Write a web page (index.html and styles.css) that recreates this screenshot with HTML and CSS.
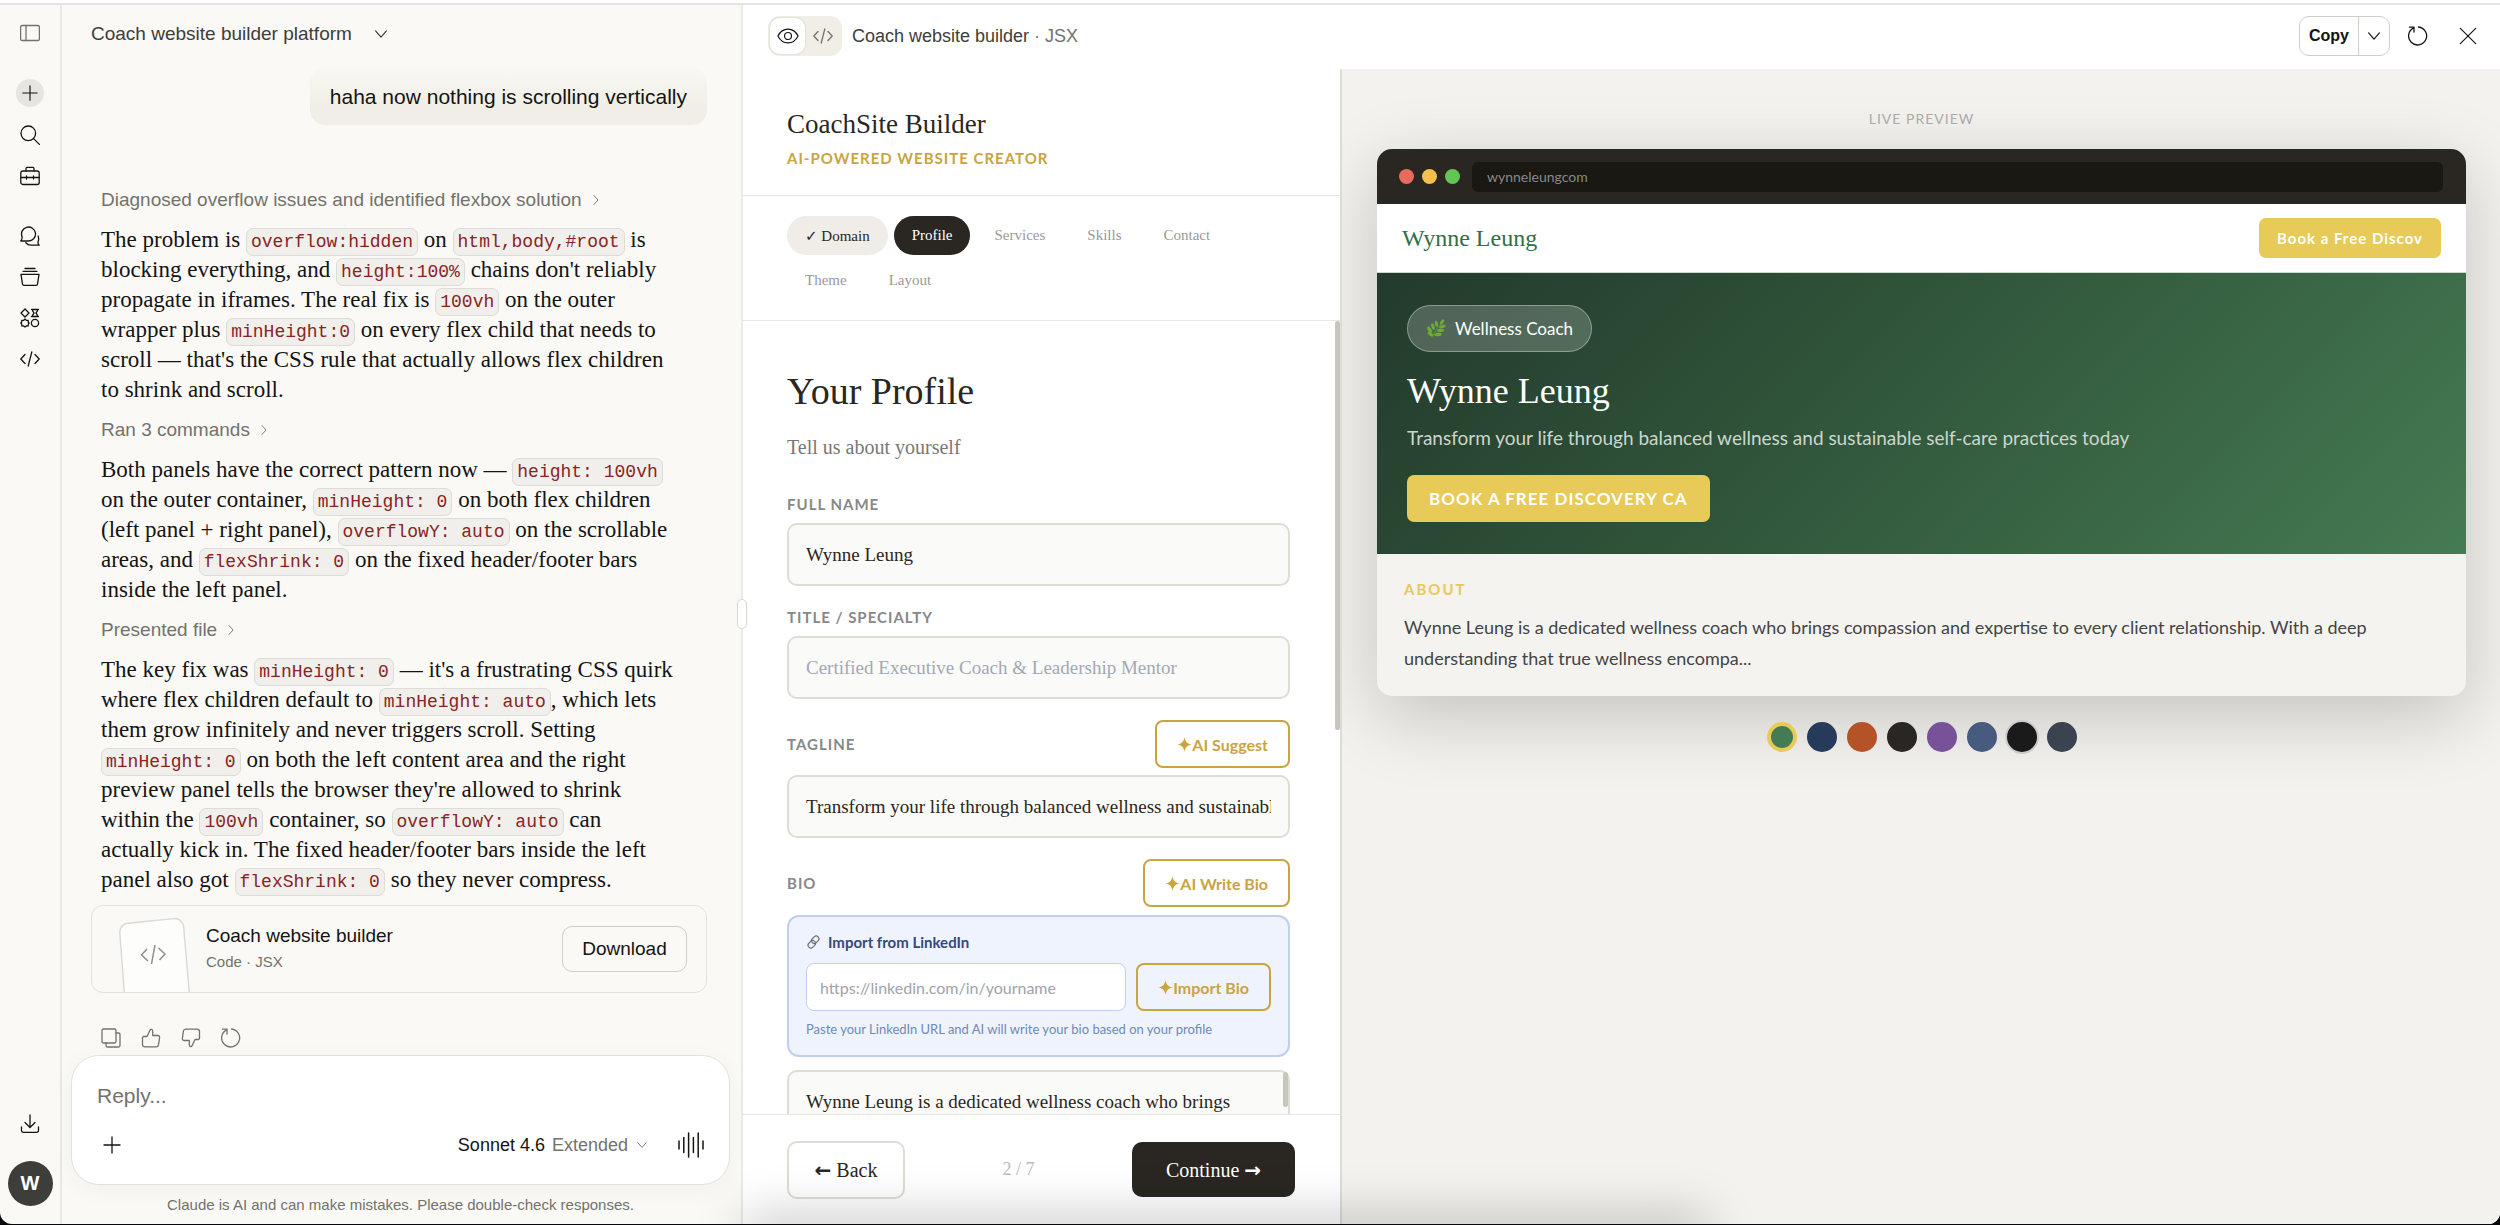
FILE: index.html
```html
<!DOCTYPE html>
<html lang="en">
<head>
<meta charset="utf-8">
<title>Coach website builder platform</title>
<link rel="stylesheet" href="styles.css">
</head>
<body>
<svg class="sprite" aria-hidden="true">
  <symbol id="i-code" viewBox="0 0 20 20"><path d="M5 5.500.8 10 5 14.500M15 5.500l4.200 4.500L15 14.500M11.800 3 8.200 17"/></symbol>
  <symbol id="i-plus" viewBox="0 0 20 20"><path d="M10 2v16M2 10h16"/></symbol>
  <symbol id="i-down" viewBox="0 0 20 20"><path d="m4 6.500 6 7 6-7"/></symbol>
  <symbol id="i-right" viewBox="0 0 20 20"><path d="m7 3.500 6 6.500-6 6.500"/></symbol>
  <symbol id="i-retry" viewBox="0 0 20 20"><path d="M1.500 1.200H6V6M5.800 1.800A9 9 0 1 0 10.500 1"/></symbol>
  <symbol id="i-spark" viewBox="0 0 20 20"><path d="M10 0c1 6.500 3.500 9 10 10-6.500 1-9 3.500-10 10-1-6.500-3.500-9-10-10 6.500-1 9-3.500 10-10z"/></symbol>
</svg>
<div class="app">
  <nav class="rail" aria-label="Main">
    <button class="rail-btn rail-toggle" aria-label="Toggle sidebar"><svg class="icon" viewBox="0 0 20 20"><rect x=".6" y="2.500" width="18.800" height="15" rx="1.500"/><path d="M6 2.500v15"/></svg></button>
    <button class="rail-btn rail-new" aria-label="New chat"><svg class="icon sm"><use href="#i-plus"/></svg></button>
    <button class="rail-btn" aria-label="Search"><svg class="icon" viewBox="0 0 20 20"><circle cx="8.300" cy="8.300" r="7.300"/><path d="m13.600 13.600 5.800 5.800"/></svg></button>
    <button class="rail-btn" aria-label="Customize"><svg class="icon" viewBox="0 0 20 20"><path d="M6 5V2.500A1.200 1.200 0 0 1 7.200 1.300h5.600A1.200 1.200 0 0 1 14 2.500V5"/><rect x=".8" y="5" width="18.400" height="13.500" rx="2"/><path d="M1 11.500h18M6.500 10v3M13.500 10v3"/></svg></button>
    <button class="rail-btn rail-gap" aria-label="Chats"><svg class="icon" viewBox="0 0 20 20"><path d="M.8 15h7.400A7 7 0 1 0 2.200 11c0 1.500-.4 2.800-1.400 4zM5.800 16.800c1.400 1.600 3.200 2.400 5.400 2.400h8c-.9-.9-1.300-2-1.300-3.200 1-1.800 1-3.800.2-6"/></svg></button>
    <button class="rail-btn" aria-label="Projects"><svg class="icon" viewBox="0 0 20 20"><path d="M5 1.500h10M3 4.300h14M1 7.300h18l-1.500 9.800a1.500 1.500 0 0 1-1.500 1.200H4a1.500 1.500 0 0 1-1.500-1.200z"/></svg></button>
    <button class="rail-btn" aria-label="Artifacts"><svg class="icon" viewBox="0 0 20 20"><path d="m5 1 4 4-4 4-4-4zM11.500 1.500h7M11.500 8.500h7M12.500 1.500c0 3 1.500 2.500 1.500 3.500s-1.500.5-1.500 3.500M17.500 1.500c0 3-1.500 2.500-1.500 3.500s1.500.5 1.500 3.500"/><circle cx="15" cy="15" r="3.600"/><path d="m5 11 1.300 1.400 1.900.1.100 1.900L9.200 15l-.9 1.200-.1 1.700-1.900.1L5 19l-1.300-1-1.900-.1-.1-1.900L.8 15l.9-1 .1-1.500 1.900-.1z"/></svg></button>
    <button class="rail-btn" aria-label="Code"><svg class="icon"><use href="#i-code"/></svg></button>
    <button class="rail-btn rail-download" aria-label="Downloads"><svg class="icon" viewBox="0 0 20 20"><path d="M10 1v12M5 8.500l5 5 5-5M1.500 13v3.500a1.800 1.800 0 0 0 1.800 1.800h13.400a1.800 1.800 0 0 0 1.800-1.800V13"/></svg></button>
    <button class="avatar" aria-label="Account">W</button>
  </nav>

  <main class="chat">
    <header class="chat-head"><h1>Coach website builder platform</h1><button class="plain" aria-label="Chat options"><svg class="icon sm"><use href="#i-down"/></svg></button></header>
    <div class="thread">
      <p class="bubble">haha now nothing is scrolling vertically</p>
      <div class="reply">
        <button class="step">Diagnosed overflow issues and identified flexbox solution <svg class="icon xs"><use href="#i-right"/></svg></button>
        <p>The problem is <code>overflow:hidden</code> on <code>html,body,#root</code> is<br>blocking everything, and <code>height:100%</code> chains don't reliably<br>propagate in iframes. The real fix is <code>100vh</code> on the outer<br>wrapper plus <code>minHeight:0</code> on every flex child that needs to<br>scroll — that's the CSS rule that actually allows flex children<br>to shrink and scroll.</p>
        <button class="step">Ran 3 commands <svg class="icon xs"><use href="#i-right"/></svg></button>
        <p>Both panels have the correct pattern now — <code>height: 100vh</code><br>on the outer container, <code>minHeight: 0</code> on both flex children<br>(left panel + right panel), <code>overflowY: auto</code> on the scrollable<br>areas, and <code>flexShrink: 0</code> on the fixed header/footer bars<br>inside the left panel.</p>
        <button class="step">Presented file <svg class="icon xs"><use href="#i-right"/></svg></button>
        <p>The key fix was <code>minHeight: 0</code> — it's a frustrating CSS quirk<br>where flex children default to <code>minHeight: auto</code>, which lets<br>them grow infinitely and never triggers scroll. Setting<br><code>minHeight: 0</code> on both the left content area and the right<br>preview panel tells the browser they're allowed to shrink<br>within the <code>100vh</code> container, so <code>overflowY: auto</code> can<br>actually kick in. The fixed header/footer bars inside the left<br>panel also got <code>flexShrink: 0</code> so they never compress.</p>
      </div>
      <article class="file">
        <div class="thumb"><svg viewBox="0 0 74 88"><path class="sheet" d="M5.500 90 .8 28a9 9 0 0 1 8-9.800l46-4.600a9 9 0 0 1 9.800 8L70.500 90"/><path d="m28 44-5.500 6 6.500 6M39.500 43l6.500 6-5.500 6M36 40l-3.500 19"/></svg></div>
        <div class="file-text"><strong>Coach website builder</strong><span>Code · JSX</span></div>
        <button class="download">Download</button>
      </article>
      <div class="actions">
        <button class="plain" aria-label="Copy"><svg class="icon" viewBox="0 0 20 20"><rect x="1" y="1" width="14" height="14" rx="1.500"/><path d="M15 5h2.500A1.500 1.500 0 0 1 19 6.500v11a1.500 1.500 0 0 1-1.500 1.500h-11A1.500 1.500 0 0 1 5 17.500V15"/></svg></button>
        <button class="plain" aria-label="Good response"><svg class="icon" viewBox="0 0 20 20"><path d="M2.500 8.500H6L9 2.200c.4-1.300 2.700-1.300 2.700 1v4.300h5c1.400 0 2.100 1 1.900 2.200l-1.100 7.100c-.2 1.200-1 2-2.200 2H4c-1.500 0-2.500-.8-2.500-2.300V9.500z"/></svg></button>
        <button class="plain" aria-label="Bad response"><svg class="icon" viewBox="0 0 20 20"><path d="M17.500 11.500H14L11 17.800c-.4 1.300-2.700 1.300-2.700-1v-4.300h-5c-1.400 0-2.100-1-1.900-2.200l1-7.100c.2-1.200 1-2 2.200-2H16c1.500 0 2.500.8 2.500 2.300v7z"/></svg></button>
        <button class="plain" aria-label="Retry"><svg class="icon"><use href="#i-retry"/></svg></button>
      </div>
    </div>
    <form class="composer">
      <input type="text" aria-label="Reply" placeholder="Reply...">
      <div class="composer-row">
        <button type="button" class="plain" aria-label="Add"><svg class="icon"><use href="#i-plus"/></svg></button>
        <button type="button" class="model"><b>Sonnet 4.6</b> Extended <svg class="icon xs"><use href="#i-down"/></svg></button>
        <button type="button" class="plain" aria-label="Voice"><svg class="icon voice" viewBox="0 0 26 26"><path d="M1 9v8M5.800 5.500v15M10.600 1v24M15.400 5.500v15M20.200 1v24M25 9v8"/></svg></button>
      </div>
    </form>
    <p class="note">Claude is AI and can make mistakes. Please double-check responses.</p>
    <span class="grip"></span>
  </main>

  <section class="artifact">
    <header class="art-head">
      <div class="seg"><button class="on" aria-label="Preview"><svg class="icon eye" viewBox="0 0 24 20"><path d="M1 10C3.500 5 7.500 2.500 12 2.500S20.500 5 23 10c-2.500 5-6.500 7.500-11 7.500S3.500 15 1 10z"/><circle cx="12" cy="10" r="3.800"/></svg></button><button aria-label="Code"><svg class="icon"><use href="#i-code"/></svg></button></div>
      <h2>Coach website builder <span>· JSX</span></h2>
      <div class="split"><button>Copy</button><button aria-label="More"><svg class="icon sm"><use href="#i-down"/></svg></button></div>
      <button class="plain" aria-label="Reload"><svg class="icon"><use href="#i-retry"/></svg></button>
      <button class="plain close" aria-label="Close"><svg class="icon sm" viewBox="0 0 20 20"><path d="m1.500 1.500 17 17M18.500 1.500l-17 17"/></svg></button>
    </header>

    <div class="builder">
      <header class="brand"><h2>CoachSite Builder</h2><p class="caps gold">AI-POWERED WEBSITE CREATOR</p></header>
      <nav class="tabs" aria-label="Steps">
        <button class="done"><i>✓</i> Domain</button><button class="current">Profile</button><button>Services</button><button>Skills</button><button>Contact</button><button>Theme</button><button>Layout</button>
      </nav>
      <div class="form-wrap">
        <form class="form">
          <h2>Your Profile</h2>
          <p class="lead">Tell us about yourself</p>
          <label class="caps" for="name">FULL NAME</label>
          <input class="field" id="name" type="text" value="Wynne Leung">
          <label class="caps" for="spec">TITLE / SPECIALTY</label>
          <input class="field" id="spec" type="text" placeholder="Certified Executive Coach &amp; Leadership Mentor">
          <div class="label-row"><label class="caps" for="tag">TAGLINE</label><button type="button" class="ai"><svg class="spark"><use href="#i-spark"/></svg>AI Suggest</button></div>
          <input class="field" id="tag" type="text" value="Transform your life through balanced wellness and sustainable self-care practices today">
          <div class="label-row"><label class="caps" for="bio">BIO</label><button type="button" class="ai"><svg class="spark"><use href="#i-spark"/></svg>AI Write Bio</button></div>
          <div class="import">
            <label for="li"><svg class="link" viewBox="0 0 20 20"><rect x="8.500" y="1.500" width="7.500" height="11" rx="3.700" transform="rotate(45 12.200 7)"/><rect x="4" y="7.500" width="7.500" height="11" rx="3.700" transform="rotate(45 7.700 13)"/></svg>Import from LinkedIn</label>
            <div class="import-row"><input id="li" type="text" placeholder="https://linkedin.com/in/yourname"><button type="button" class="ai"><svg class="spark"><use href="#i-spark"/></svg>Import Bio</button></div>
            <p>Paste your LinkedIn URL and AI will write your bio based on your profile</p>
          </div>
          <div class="bio-box"><textarea class="field" id="bio">Wynne Leung is a dedicated wellness coach who brings</textarea><span class="thumb-sm"></span></div>
        </form>
        <span class="scroll-thumb"></span>
      </div>
      <footer class="steps"><button class="back"><i>←</i> Back</button><span>2 / 7</span><button class="next">Continue <i>→</i></button></footer>
    </div>

    <div class="preview">
      <p class="live">LIVE PREVIEW</p>
      <div class="site">
        <div class="chrome"><i class="r"></i><i class="y"></i><i class="g"></i><span>wynneleungcom</span></div>
        <div class="site-nav"><a class="logo" href="#">Wynne Leung</a><a class="cta-sm" href="#">Book a Free Discov</a></div>
        <div class="hero">
          <span class="pill"><svg class="leaf" viewBox="0 0 20 20"><path class="stem" d="M6 19C8 13 11 9 15.500 5"/><g><ellipse cx="3.500" cy="10.500" rx="1.700" ry="3.300" transform="rotate(-35 3.500 10.500)"/><ellipse cx="7" cy="7.500" rx="1.600" ry="3.300" transform="rotate(-20 7 7.500)"/><ellipse cx="10.500" cy="4.800" rx="1.500" ry="3.200" transform="rotate(-10 10.500 4.800)"/><ellipse cx="16" cy="3" rx="1.500" ry="3.200" transform="rotate(35 16 3)"/><ellipse cx="16.500" cy="7.500" rx="1.500" ry="3.400" transform="rotate(75 16.500 7.500)"/><ellipse cx="14.500" cy="11.300" rx="1.600" ry="3.600" transform="rotate(85 14.500 11.300)"/><ellipse cx="12" cy="15.500" rx="1.700" ry="3.800" transform="rotate(85 12 15.500)"/><ellipse cx="4.500" cy="15" rx="1.700" ry="3.300" transform="rotate(-50 4.500 15)"/></g></svg>Wellness Coach</span>
          <h2>Wynne Leung</h2>
          <p>Transform your life through balanced wellness and sustainable self-care practices today</p>
          <a class="cta" href="#">BOOK A FREE DISCOVERY CA</a>
        </div>
        <div class="about"><h3>ABOUT</h3><p>Wynne Leung is a dedicated wellness coach who brings compassion and expertise to every client relationship. With a deep<br>understanding that true wellness encompa...</p></div>
      </div>
      <div class="swatches">
        <button class="sw sw-green" aria-label="Green"></button><button class="sw sw-navy" aria-label="Navy"></button><button class="sw sw-rust" aria-label="Rust"></button><button class="sw sw-ink" aria-label="Ink"></button><button class="sw sw-purple" aria-label="Purple"></button><button class="sw sw-blue" aria-label="Blue"></button><button class="sw sw-black" aria-label="Black"></button><button class="sw sw-slate" aria-label="Slate"></button>
      </div>
    </div>
  </section>
</div>
</body>
</html>
```
FILE: styles.css
```css
:root {
  --sans: "Liberation Sans", Arial, sans-serif;
  --serif: "Liberation Serif", "Times New Roman", serif;
  --geo: Lato, "Open Sans", sans-serif;
  --gold: #c9a43f;
  --ink: #2a2621;
}
* { box-sizing: border-box; }
html, body { height: 100%; }
body { margin: 0; background: #08080c; font-family: var(--sans); color: #141413; overflow: hidden; }
h1, h2, h3, p { margin: 0; font-weight: 400; }
button { font: inherit; color: inherit; background: none; border: 0; padding: 0; white-space: nowrap; }
input, textarea { font: inherit; color: inherit; outline: 0; }
a { color: inherit; text-decoration: none; }
i { font-style: normal; }
.sprite { display: none; }
.icon { width: 20px; height: 20px; display: block; fill: none; stroke: currentColor; stroke-width: 1.3; stroke-linecap: round; stroke-linejoin: round; flex: none; }
.icon.sm { width: 18px; height: 18px; }
.icon.xs { width: 14px; height: 14px; }
.plain { display: grid; place-items: center; }

.app { display: grid; grid-template-rows: minmax(0, 1fr); grid-template-columns: 62px minmax(0, 681fr) minmax(0, 1757fr); height: calc(100vh - 1px); border-top: 3px solid #fff; border-radius: 0 0 12px 12px; background: #faf9f5; overflow: hidden; position: relative; }
.app::before { content: ""; position: absolute; top: 0; left: 0; right: 0; height: 2px; background: #e5e5e4; z-index: 2; }
.app::after { content: ""; position: absolute; left: 30%; right: 32%; bottom: -20px; height: 20px; box-shadow: 0 0 50px 6px rgba(0, 0, 0, .26); pointer-events: none; }

.rail { display: flex; flex-direction: column; align-items: center; border-right: 2px solid #e9e8e4; padding: 16px 0 18px; }
.rail-btn { display: grid; place-items: center; width: 28px; height: 28px; margin-bottom: 13px; }
.rail-toggle { margin-bottom: 32px; color: #73726c; }
.rail-new { background: #e6e5e0; border-radius: 50%; margin-bottom: 14px; }
.rail-gap { margin-top: 19px; }
.rail-download { margin-top: auto; margin-bottom: 23px; }
.avatar { width: 45px; height: 45px; border-radius: 50%; background: #3d3d3a; color: #fff; font-size: 20px; font-weight: 700; }

.chat { position: relative; display: flex; flex-direction: column; min-width: 0; padding: 2px 11px 9px 9px; border-right: 2px solid #ebeae6; }
.chat-head { display: flex; align-items: center; gap: 20px; height: 57px; padding-left: 20px; color: #3d3d3a; }
.chat-head h1 { font-size: 19px; }
.thread { display: flex; flex-direction: column; padding: 6px 23px 0 20px; }
.bubble { align-self: flex-end; padding: 14px 20px; line-height: 29px; font-size: 21px; border-radius: 15px; background: linear-gradient(#f8f7f3, #f0eee6 70%); white-space: nowrap; }
.reply { padding: 60px 0 0 10px; display: flex; flex-direction: column; align-items: flex-start; gap: 10px; }
.step { display: flex; align-items: center; gap: 7px; line-height: 30px; font-size: 19px; color: #73726c; }
.reply p { font-family: var(--serif); font-size: 23px; line-height: 30px; white-space: nowrap; }
code { font-family: "Liberation Mono", monospace; font-size: 18px; line-height: 20px; color: #8a2424; background: #f0efeb; border: 1px solid #dddcd6; border-radius: 7px; padding: 3px 4px; }
.file { display: flex; align-items: center; height: 88px; margin-top: 10px; padding: 0 19px 0 27px; border: 1px solid #e2e1db; border-radius: 12px; overflow: hidden; }
.thumb { width: 74px; height: 88px; }
.thumb svg { width: 74px; height: 88px; display: block; fill: none; stroke: #8b8a85; stroke-width: 1.4; }
.thumb .sheet { fill: #fdfdfb; stroke: #dad9d4; }
.file-text { flex: 1; display: flex; flex-direction: column; gap: 2px; margin-left: 13px; line-height: 24px; font-size: 15px; color: #73726c; }
.file-text strong { font-weight: 400; font-size: 19px; color: #141413; }
.download { width: 125px; height: 46px; border: 1px solid #cfcec8; border-radius: 10px; font-size: 19px; }
.actions { display: flex; gap: 20px; margin: 35px 0 0 10px; color: #73726c; }
.composer { margin-top: auto; height: 130px; padding: 23px 25px 23px 25px; display: flex; flex-direction: column; justify-content: space-between; background: #fff; border: 1px solid #e2e1db; border-radius: 28px; box-shadow: 0 5px 25px rgba(0, 0, 0, .04); flex: none; }
.composer input { border: 0; background: none; padding: 0; height: 34px; font-size: 21px; width: 100%; }
.composer input::placeholder { color: #73726c; opacity: 1; }
.composer-row { display: flex; align-items: center; gap: 29px; height: 32px; padding-left: 5px; }
.model { margin-left: auto; display: flex; align-items: center; gap: 7px; font-size: 18px; color: #73726c; }
.model b { font-weight: 400; color: #141413; }
.icon.voice { width: 26px; height: 26px; stroke-width: 1.5; }
.note { margin-top: 10px; line-height: 20px; font-size: 15px; text-align: center; color: #73726c; }
.grip { position: absolute; right: -6px; top: 596px; width: 10px; height: 30px; border-radius: 5px; background: #fff; border: 1px solid #d6d5d0; z-index: 3; }

.artifact { display: grid; grid-template: 66px minmax(0, 1fr) / minmax(0, 599fr) minmax(0, 1158fr); background: #fff; min-width: 0; }
.art-head { grid-column: 1 / -1; display: flex; align-items: center; padding: 0 23px 0 25px; }
.seg { display: flex; width: 74px; height: 40px; padding: 2px; border-radius: 12px; background: #f0eee6; color: #73726c; }
.seg button { flex: 1; display: grid; place-items: center; border-radius: 10px; }
.seg .on { background: #fff; color: #141413; box-shadow: 0 0 1px 1px #e2e0d8; }
.icon.eye { width: 22px; }
.art-head h2 { margin: 0 auto 0 10px; font-size: 18px; color: #3d3d3a; }
.art-head h2 span { color: #73726c; }
.split { display: flex; height: 40px; border: 1px solid #cfcec8; border-radius: 10px; font-size: 16px; font-weight: 700; margin-right: 18px; }
.split button { width: 58px; display: grid; place-items: center; }
.split button + button { width: 31px; border-left: 1px solid #cfcec8; }
.close { margin-left: 31px; }

.builder { display: flex; flex-direction: column; min-height: 0; border-right: 2px solid #deddd5; font-family: var(--serif); color: var(--ink); }
.brand { padding: 37px 44px 27px; border-bottom: 1px solid #e8e6e0; }
.brand h2 { font-size: 27px; line-height: 36px; }
.caps { display: block; font-family: var(--geo); font-weight: 700; font-size: 15px; line-height: 20px; letter-spacing: 1px; color: #888; }
.brand .caps { margin-top: 6px; }
.caps.gold { color: var(--gold); }
.tabs { display: flex; flex-wrap: wrap; gap: 6px; padding: 20px 44px; border-bottom: 1px solid #e8e6e0; font-size: 15px; color: #999; }
.tabs button { height: 39px; padding: 0 18px; border-radius: 20px; }
.tabs .done { background: #f0ede8; color: var(--ink); }
.tabs .done i { font-family: "DejaVu Sans"; font-weight: 700; }
.tabs .current { background: var(--ink); color: #fff; }
.form-wrap { flex: 1; min-height: 0; position: relative; overflow: hidden; }
.form { padding: 46px 50px 0 44px; display: flex; flex-direction: column; }
.form h2 { font-size: 38px; line-height: 48px; }
.lead { margin: 20px 0 13px; font-size: 20px; line-height: 24px; color: #777; }
.form > .caps { margin-top: 21px; }
.lead + .caps { padding-top: 1px; }
.field { width: 100%; height: 63px; margin-top: 9px; padding: 0 17px; border: 2px solid #deddd5; border-radius: 10px; background: #fafaf8; font-size: 19px; }
.field::placeholder { color: #a3a8b4; opacity: 1; }
.label-row { display: flex; align-items: center; justify-content: space-between; margin-top: 21px; }
.label-row + .field { margin-top: 7px; }
.ai { display: flex; align-items: center; height: 48px; padding: 0 20px; border: 2px solid var(--gold); border-radius: 8px; color: var(--gold); font-family: var(--geo); font-weight: 700; font-size: 16px; }
.spark { width: 15px; height: 15px; fill: currentColor; }
.import { margin-top: 8px; padding: 15px 17px 16px; border: 2px solid #bed0ee; border-radius: 12px; background: #eff3fe; font-family: var(--geo); }
.import label { display: flex; align-items: center; gap: 7px; font-size: 15px; line-height: 20px; font-weight: 700; color: #34497a; }
.link { width: 15px; height: 18px; fill: none; stroke: #6c7078; stroke-width: 1.5; }
.import-row { display: flex; gap: 10px; margin-top: 11px; }
.import-row input { flex: 1; min-width: 0; height: 48px; padding: 0 13px; border: 1px solid #bed0ee; border-radius: 8px; background: #fff; font-size: 16px; }
.import-row input::placeholder { color: #a0a3ab; opacity: 1; }
.import p { margin-top: 8px; font-size: 13px; line-height: 20px; color: #7089b5; }
.bio-box { position: relative; margin-top: 13px; }
textarea.field { display: block; margin: 0; height: 150px; padding: 15px 17px; line-height: 29px; resize: none; overflow: hidden; }
.thumb-sm { position: absolute; top: 2px; right: 2px; width: 5px; height: 35px; border-radius: 3px; background: #c8c4be; }
.scroll-thumb { position: absolute; top: 0; right: 0; width: 5px; height: 409px; border-radius: 3px; background: #c8c4be; }
.steps { display: flex; align-items: center; justify-content: space-between; height: 110px; flex: none; padding: 0 45px 0 44px; border-top: 1px solid #e8e6e0; font-size: 20px; }
.steps span { font-size: 18px; color: #bbb; }
.steps i { font-family: "DejaVu Sans"; font-weight: 700; }
.back { width: 118px; height: 58px; border: 2px solid #deddd5; border-radius: 10px; }
.next { width: 163px; height: 55px; border-radius: 10px; background: var(--ink); color: #fff; }

.preview { background: #f3f2ee; padding: 40px 34px 0 35px; font-family: var(--geo); overflow: hidden; }
.live { text-align: center; font-size: 14px; line-height: 20px; letter-spacing: 1px; color: #aaa; }
.site { margin-top: 20px; border-radius: 15px; overflow: hidden; background: #f4f3ef; box-shadow: 0 20px 75px rgba(0, 0, 0, .2); }
.chrome { display: flex; align-items: center; height: 55px; padding: 0 23px 0 22px; background: var(--ink); }
.chrome i { width: 15px; height: 15px; border-radius: 50%; margin-right: 8px; }
.chrome .r { background: #eb6a5e; }
.chrome .y { background: #f5bf50; }
.chrome .g { background: #62c655; }
.chrome span { flex: 1; margin-left: 4px; padding-left: 15px; border-radius: 6px; background: #191813; color: #888; font-size: 14px; line-height: 30px; }
.site-nav { display: flex; align-items: center; justify-content: space-between; height: 69px; padding: 0 25px; background: #fff; border-bottom: 1px solid #ccd8d0; }
.logo { font-family: var(--serif); font-size: 24px; color: #2f7046; }
.cta-sm { padding: 0 18px; border-radius: 7px; background: #e8ca58; color: #fff; font-size: 15px; line-height: 40px; font-weight: 700; letter-spacing: 1px; }
.hero { padding: 32px 30px; background: linear-gradient(135deg, #233a2c, #2f5339 40%, #457b53); color: #fff; }
.pill { display: inline-flex; align-items: center; gap: 9px; height: 47px; padding: 0 18px; border: 1px solid rgba(255, 255, 255, .35); border-radius: 24px; background: rgba(255, 255, 255, .2); font-size: 17px; }
.leaf { width: 20px; height: 22px; fill: #6fab36; }
.leaf .stem { fill: none; stroke: #4f8a2c; stroke-width: 1.5; }
.hero h2 { margin-top: 15px; font-family: var(--serif); font-size: 36px; line-height: 48px; }
.hero p { margin: 8px 0 22px; font-size: 19px; line-height: 30px; color: #ccd6ce; }
.cta { display: inline-block; padding: 0 22px; border-radius: 7px; background: #e8ca58; font-size: 17px; line-height: 47px; font-weight: 700; letter-spacing: 1px; }
.about { padding: 24px 27px 22px; }
.about h3 { font-size: 15px; line-height: 22px; font-weight: 700; letter-spacing: 2px; color: #e8ca58; }
.about p { margin-top: 12px; font-size: 18px; line-height: 31px; color: #444; }
.swatches { position: relative; display: flex; justify-content: center; gap: 10px; margin-top: 26px; }
.sw { width: 30px; height: 30px; border-radius: 50%; }
.sw-green { background: #457b53; border: 4px solid #e8ca58; }
.sw-navy { background: #263a5c; }
.sw-rust { background: #b55328; }
.sw-ink { background: #2a2621; }
.sw-purple { background: #775299; }
.sw-blue { background: #465b7d; }
.sw-black { background: #1a1a1a; box-shadow: 0 0 0 2px #ccc; }
.sw-slate { background: #3b4250; }
```
